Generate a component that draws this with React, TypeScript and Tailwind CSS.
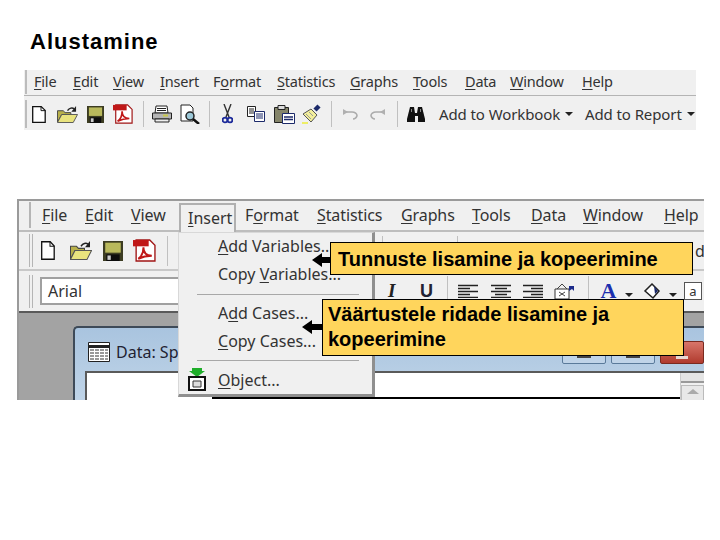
import React from "react";

const M = ({ w, u, rest, pre = "" }: { w: number; u: string; rest: string; pre?: string }) => (
  <span style={{ width: w }} className="shrink-0 block whitespace-nowrap">
    {pre}
    <span className="underline underline-offset-2">{u}</span>
    {rest}
  </span>
);

type S = { w: number; h: number };

const Doc = ({ w, h }: S) => (
  <svg width={w} height={h} viewBox="0 0 14 18" preserveAspectRatio="none" className="block shrink-0"><path d="M.7.7h8.5l4 4v12.6H.7z" fill="#fff" stroke="#111" strokeWidth="1.3" /><path d="M9 .7v4.2h4.3" fill="none" stroke="#111" /></svg>
);
const Folder = ({ w, h }: S) => (
  <svg width={w} height={h} viewBox="0 0 22 18" preserveAspectRatio="none" className="block shrink-0"><path d="M.5 5h6l2 2h6v2H5L.5 17z" fill="#b8b04a" stroke="#444" /><path d="M.5 17.5L5 9h16.5L17 17.5z" fill="#e9e37e" stroke="#555" /><path d="M11 5c2-3 5-3.500 7-2" fill="none" stroke="#222" strokeWidth="1.5" /><path d="M20 0v6h-5z" fill="#222" /></svg>
);
const Save = ({ w, h }: S) => (
  <svg width={w} height={h} viewBox="0 0 18 18" preserveAspectRatio="none" className="block shrink-0"><path d="M0 0h18v18H0z" fill="#3c3c22" /><path d="M2 1.500h14v9H2z" fill="#b9b95c" /><path d="M3 12h12v6H3z" fill="#0c0c0c" /><path d="M4 13h3v4H4z" fill="#ccc" /></svg>
);
const Pdf = ({ w, h }: S) => (
  <svg width={w} height={h} viewBox="0 0 22 22" preserveAspectRatio="none" className="block shrink-0"><path d="M3 1h13l5 5v15H3z" fill="#fff" stroke="#a01515" strokeWidth="1.300" /><path d="M0 1h15v6H0z" fill="#c01818" /><path d="M5 19c3-2 5-6 5-11 0 5 3 8 8 8-5 0-9 1-13 3z" fill="none" stroke="#c01818" strokeWidth="1.800" /></svg>
);
const Printer = () => (
  <svg width="20" height="18" viewBox="0 0 20 18" className="block shrink-0"><path d="M4 1h11l1 7H3z" fill="#fff" stroke="#222" /><path d="M.5 8h19v6H.5z" fill="#b5b5b5" stroke="#222" /><path d="M3 14h14v3H3z" fill="#eee" stroke="#222" /><path d="M11 10.500h5" stroke="#c8c84a" strokeWidth="2" /><path d="M5 3.500h9M5 5.500h9" stroke="#222" /></svg>
);
const Preview = () => (
  <svg width="20" height="20" viewBox="0 0 20 20" className="block shrink-0"><path d="M1 1h9l3 3v13H1z" fill="#fff" stroke="#222" /><circle cx="10" cy="12" r="4" fill="#9cc8d8" stroke="#222" strokeWidth="1.500" /><path d="M13 15l6 5" stroke="#111" strokeWidth="2.500" /></svg>
);
const Cut = () => (
  <svg width="11" height="20" viewBox="0 0 11 20" className="block shrink-0"><path d="M2 0l5 13M9 0L4 13" stroke="#333" strokeWidth="1.400" /><circle cx="3" cy="16" r="2.400" fill="none" stroke="#1c2a9a" strokeWidth="1.800" /><circle cx="8" cy="16" r="2.400" fill="none" stroke="#1c2a9a" strokeWidth="1.800" /></svg>
);
const Copy = () => (
  <svg width="18" height="16" viewBox="0 0 18 16" className="block shrink-0"><path d="M.5.500h8v10h-8z" fill="#fff" stroke="#222" /><path d="M2 3h5M2 5h5M2 7h5" stroke="#222" /><path d="M7.500 5.500h10v10h-10z" fill="#fff" stroke="#1c2a6a" /><path d="M9 8h7M9 10h7M9 12h7" stroke="#1c2a6a" /></svg>
);
const Paste = () => (
  <svg width="21" height="19" viewBox="0 0 21 19" className="block shrink-0"><path d="M.5 2.500h14v15H.5z" fill="#85856a" stroke="#222" /><path d="M4 .5h7v4H4z" fill="#ddd" stroke="#222" /><path d="M8.500 8.500h12v10h-12z" fill="#fff" stroke="#1c2a6a" /><path d="M10 12h9M10 14.500h9" stroke="#1c2a6a" strokeWidth="1.500" /></svg>
);
const Brush = () => (
  <svg width="20" height="20" viewBox="0 0 20 20" className="block shrink-0"><path d="M13 6l4-4" stroke="#1c2a6a" strokeWidth="4.500" /><path d="M1 10l8-5 6 6-6 7z" fill="#f2ee9a" stroke="#555" /><path d="M4 10l5 5M7 8l4 4" stroke="#999" /><path d="M0 19h6" stroke="#ee6" strokeWidth="2" /></svg>
);
const Undo = ({ flip }: { flip?: boolean }) => (
  <svg width="16" height="12" viewBox="0 0 16 12" className={`block shrink-0 ${flip ? "-scale-x-100" : ""}`}><path d="M3 4h7c3 0 5 2 5 3.500S13 11 11 11" fill="none" stroke="#ababab" strokeWidth="1.600" /><path d="M1 1v6l5-3z" fill="#b0b0b0" /></svg>
);
const Binoc = () => (
  <svg width="18" height="16" viewBox="0 0 18 16" className="block shrink-0"><path d="M3 1h4l1 6h2l1-6h4l3 12v3h-7V10H8v6H0v-3z" fill="#111" /><path d="M4 3h1v3H4zM13 3h1v3h-1z" fill="#888" /></svg>
);
const AlignL = ({ mode }: { mode: "l" | "c" | "r" }) => {
  const short = mode === "l" ? "M0 4.500h12M0 10.500h12" : mode === "c" ? "M4 4.500h12M4 10.500h12" : "M8 4.500h12M8 10.500h12";
  return (
    <svg width="20" height="14" viewBox="0 0 20 14" className="block shrink-0"><path d="M0 1.500h20M0 7.500h20M0 13.500h20" stroke="#222" strokeWidth="1.500" /><path d={short} stroke="#222" strokeWidth="1.500" /></svg>
  );
};

const V = ({ ml, h = 26 }: { ml: number; h?: number }) => (
  <span style={{ marginLeft: ml, height: h }} className="w-px bg-[#c0c0c0] shrink-0 block" />
);
const Gap = ({ w }: { w: number }) => <span style={{ width: w }} className="shrink-0 block" />;
const Grip = () => <span className="w-[4px] h-[33px] border-x border-[#b5b5b5] shrink-0 block" />;
const Caret = () => <span className="inline-block w-0 h-0 border-x-[4px] border-x-transparent border-t-[4px] border-t-[#222]" />;
const Arrow = ({ w }: { w: number }) => (
  <svg width={w} height="16" viewBox={`0 0 ${w} 16`} className="block"><path d={`M0 8l10-7v4h${w - 10}v6H10v4z`} fill="#000" /></svg>
);

export default function App() {
  return (
    <div className="w-[720px] h-[540px] bg-white overflow-hidden font-['Noto_Sans',sans-serif]">
      <h1 className="pt-[27px] pl-[30px] h-[70px] text-[22px] leading-[30px] font-bold tracking-[1px] text-black font-['Liberation_Sans',sans-serif]">
        Alustamine
      </h1>

      <div className="ml-[24px] w-[672px] h-[60px] bg-[#f0f0f0] text-[14.5px] text-[#333]">
        <div className="flex items-center h-[26px] border-b border-[#b4b4b4] pl-[1px] pb-[2px]">
          <span className="w-[2px] h-[24px] bg-[#bcbcbc] mr-[7px]" />
          <div className="flex items-center tracking-[-0.2px]">
            <M w={39} u="F" rest="ile" />
            <M w={40} u="E" rest="dit" />
            <M w={47} u="V" rest="iew" />
            <M w={53} u="I" rest="nsert" />
            <M w={64} pre="F" u="o" rest="rmat" />
            <M w={73} u="S" rest="tatistics" />
            <M w={63} u="G" rest="raphs" />
            <M w={52} u="T" rest="ools" />
            <M w={45} u="D" rest="ata" />
            <M w={72} u="W" rest="indow" />
            <M w={40} u="H" rest="elp" />
          </div>
        </div>
        <div className="flex items-center h-[34px] pl-[1px] pt-[2px]">
          <span className="w-[2px] h-[28px] bg-[#bcbcbc]" />
          <Gap w={5} />
          <Doc w={14} h={17} />
          <Gap w={11} />
          <Folder w={21} h={17} />
          <Gap w={9} />
          <Save w={17} h={17} />
          <Gap w={9} />
          <Pdf w={20} h={20} />
          <V ml={10} />
          <Gap w={8} />
          <Printer />
          <Gap w={8} />
          <Preview />
          <V ml={9} />
          <Gap w={12} />
          <Cut />
          <Gap w={14} />
          <Copy />
          <Gap w={9} />
          <Paste />
          <Gap w={7} />
          <Brush />
          <V ml={9} />
          <Gap w={10} />
          <Undo />
          <Gap w={12} />
          <Undo flip />
          <V ml={11} />
          <Gap w={9} />
          <Binoc />
          <span className="ml-[14px] w-[146px] text-[15px] tracking-[-0.1px] flex items-center gap-[5px] whitespace-nowrap">Add to Workbook <Caret /></span>
          <span className="text-[15px] tracking-[-0.1px] flex items-center gap-[5px] whitespace-nowrap">Add to Report <Caret /></span>
        </div>
      </div>

      <div className="relative ml-[17px] mt-[69px] w-[687px] h-[201px] bg-[#f0f0f0] overflow-hidden border-l-2 border-t-2 border-[#9a9a9a] text-[#333]">
        <div className="flex items-center h-[31px] border-b-2 border-[#bdbdbd] pl-[10px] pb-[2px] text-[16px] tracking-[-0.1px]">
          <span className="w-[4px] h-[26px] border-x border-[#b5b5b5] mr-[11px]" />
          <M w={43} u="F" rest="ile" />
          <M w={46} u="E" rest="dit" />
          <M w={55} u="V" rest="iew" />
          <Gap w={59} />
          <M w={72} pre="F" u="o" rest="rmat" />
          <M w={84} u="S" rest="tatistics" />
          <M w={71} u="G" rest="raphs" />
          <M w={59} u="T" rest="ools" />
          <M w={52} u="D" rest="ata" />
          <M w={81} u="W" rest="indow" />
          <M w={40} u="H" rest="elp" />
        </div>

        <div className="flex items-center h-[39px] border-b-2 border-[#c8c8c8] pl-[10px]">
          <Grip />
          <Gap w={8} />
          <Doc w={14} h={19} />
          <Gap w={15} />
          <Folder w={22} h={19} />
          <Gap w={11} />
          <Save w={20} h={20} />
          <Gap w={10} />
          <Pdf w={23} h={23} />
          <V ml={11} h={30} />
          <V ml={214} h={30} />
          <V ml={74} h={30} />
          <span className="ml-[237px] text-[16px]">d</span>
        </div>

        <div className="flex items-center h-[40px] pl-[10px]">
          <Grip />
          <div className="ml-[7px] w-[138px] h-[28px] bg-white border-2 border-r-0 border-[#a0a0a0] flex items-center pl-[6px] text-[16px] shrink-0">Arial</div>
          <V ml={195} h={30} />
          <span className="ml-[14px] w-[8px] text-[19px] font-bold italic text-[#222] font-['Liberation_Serif',serif]">I</span>
          <span className="ml-[24px] w-[11px] text-[18px] font-bold text-[#223] font-['Liberation_Sans',sans-serif]">U</span>
          <V ml={16} h={30} />
          <Gap w={10} />
          <AlignL mode="l" />
          <Gap w={13} />
          <AlignL mode="c" />
          <Gap w={12} />
          <AlignL mode="r" />
          <Gap w={11} />
          <svg width="22" height="18" viewBox="0 0 22 18" className="block shrink-0"><path d="M1 7h14v10H1z" fill="#fff" stroke="#333" /><path d="M3 7l5-5 5 5M5 10l6 4M11 10l-6 4" fill="none" stroke="#444" /><path d="M15 4h5v5l-2-2-3 2z" fill="#1c2a8a" /></svg>
          <V ml={12} h={30} />
          <span className="ml-[10px] w-[19px] text-center text-[22px] leading-none font-bold text-[#1c2fae] font-['Liberation_Serif',serif]">A</span>
          <span className="ml-[7px] block"><Caret /></span>
          <Gap w={10} />
          <svg width="18" height="18" viewBox="0 0 18 18" className="block shrink-0"><path d="M9 2l7 7-6 7-8-7z" fill="#fff" stroke="#222" strokeWidth="1.500" /><path d="M11 4l4 5-3 3z" fill="#1c2a6a" /></svg>
          <span className="ml-[8px] block"><Caret /></span>
          <span className="ml-[7px] w-[18px] h-[18px] border border-[#555] bg-white text-[13px] leading-[16px] text-center shrink-0">a</span>
        </div>

        <div className="h-[89px] bg-[#a3a3a3] border-t-2 border-[#5a5a5a] pl-[54px] pt-[13px]">
          <div className="flex flex-col h-[90px] rounded-tl-[5px] bg-gradient-to-b from-[#a9c4df] to-[#c5d8ea] border-l-2 border-t-2 border-[#3e4a58] pl-[10px]">
            <div className="relative flex items-center gap-[6px] h-[43px] pt-[4px] shrink-0 text-[16px] text-[#223]">
              <svg width="22" height="20" viewBox="0 0 22 20" className="ml-[3px] shrink-0"><path d="M.5.5h21v19H.5z" fill="#fff" stroke="#222" /><path d="M.5 4.500h21" stroke="#222" strokeWidth="3" /><path d="M2 8h18M2 11h18M2 14h18M2 17h18" stroke="#333" strokeDasharray="4 1" /></svg>
              Data: Sp
              <div className="absolute right-0 top-[13px] flex gap-[5px]">
                <span className="w-[44px] h-[23px] bg-[#c0d4e8] border border-[#5a7a9a] rounded-[2px] flex justify-center items-end pb-[5px]"><span className="w-[14px] h-[2px] bg-[#444]" /></span>
                <span className="w-[44px] h-[23px] bg-[#c0d4e8] border border-[#5a7a9a] rounded-[2px] flex justify-center items-end pb-[5px]"><span className="w-[14px] h-[2px] bg-[#444]" /></span>
                <span className="w-[44px] h-[23px] bg-gradient-to-b from-[#d8756a] to-[#b03a2e] border border-[#7a2a20] rounded-[2px] flex justify-center items-end pb-[4px]"><span className="w-[12px] h-[3px] bg-[#e8d8d4]" /></span>
              </div>
            </div>
            <div className="h-[30px] bg-white border-t-2 border-l-2 border-[#5a5a5a] relative">
              <div className="absolute left-[125px] right-[24px] top-[24px] h-[2px] bg-black" />
              <div className="absolute right-0 top-0 w-[24px] h-full bg-[#f0f0f0] border-l border-[#ccc] flex flex-col">
                <span className="h-[10px] bg-[#e4e4e4] border-b-2 border-[#9a9a9a]" />
                <span className="mt-[2px] flex-1 bg-[#e8e8e8] border border-[#bbb] flex justify-center pt-[3px]">
                  <span className="w-0 h-0 border-x-[6px] border-x-transparent border-b-[5px] border-b-[#aaa]" />
                </span>
              </div>
            </div>
          </div>
        </div>

        {/* Insert menu */}
        <div className="absolute left-[160px] top-[2px] w-[57px] h-[31px] border-2 border-b-0 border-[#b0b0b0] bg-[#f0f0f0] pl-[7px] text-[16px] leading-[27px]">
          <span className="underline underline-offset-2">I</span>nsert
        </div>
        <div className="absolute left-[159px] top-[31px] w-[197px] h-[165px] bg-[#f0f0f0] border-t border-l border-[#d8d8d8] border-b-[3px] border-b-[#8f8f8f] border-r-[3px] border-r-[#8f8f8f] text-[16px] pl-[39px]">
          <div className="-mt-[1px] leading-[28px]"><span className="underline underline-offset-2">A</span>dd Variables...</div>
          <div className="leading-[28px]">Copy <span className="underline underline-offset-2">V</span>ariables...</div>
          <div className="h-px bg-[#a8a8a8] mt-[6px] mb-[4px] -ml-[21px] w-[162px]" />
          <div className="leading-[28px]">A<span className="underline underline-offset-2">d</span>d Cases...</div>
          <div className="leading-[28px]"><span className="underline underline-offset-2">C</span>opy Cases...</div>
          <div className="h-px bg-[#a8a8a8] mt-[5px] mb-[5px] -ml-[21px] w-[162px]" />
          <div className="relative leading-[28px]">
            <span className="absolute -left-[31px] top-[2px]">
              <svg width="20" height="24" viewBox="0 0 20 24" className="block"><path d="M5 0h10v3h3l-8 6-8-6h3z" fill="#1fae2a" /><path d="M2 9h16v13H2z" fill="#fff" stroke="#111" strokeWidth="2" /><path d="M6 13h8v6H6z" fill="#ddd" stroke="#333" /></svg>
            </span>
            <span className="underline underline-offset-2">O</span>bject...
          </div>
        </div>

        {/* Callouts */}
        <div className="absolute left-[311px] top-[41px] w-[363px] h-[33px] bg-[#ffd55c] border border-black pl-[7px] text-[20px] leading-[32px] font-bold text-black font-['Liberation_Sans',sans-serif] whitespace-nowrap">
          Tunnuste lisamine ja kopeerimine
        </div>
        <div className="absolute left-[293px] top-[51px]"><Arrow w={19} /></div>
        <div className="absolute left-[303px] top-[98px] w-[362px] h-[57px] bg-[#ffd55c] border border-black pl-[5px] pt-[2px] text-[20px] leading-[25px] font-bold text-black font-['Liberation_Sans',sans-serif]">
          Väärtustele ridade lisamine ja<br />kopeerimine
        </div>
        <div className="absolute left-[283px] top-[118px]"><Arrow w={21} /></div>
      </div>
    </div>
  );
}
